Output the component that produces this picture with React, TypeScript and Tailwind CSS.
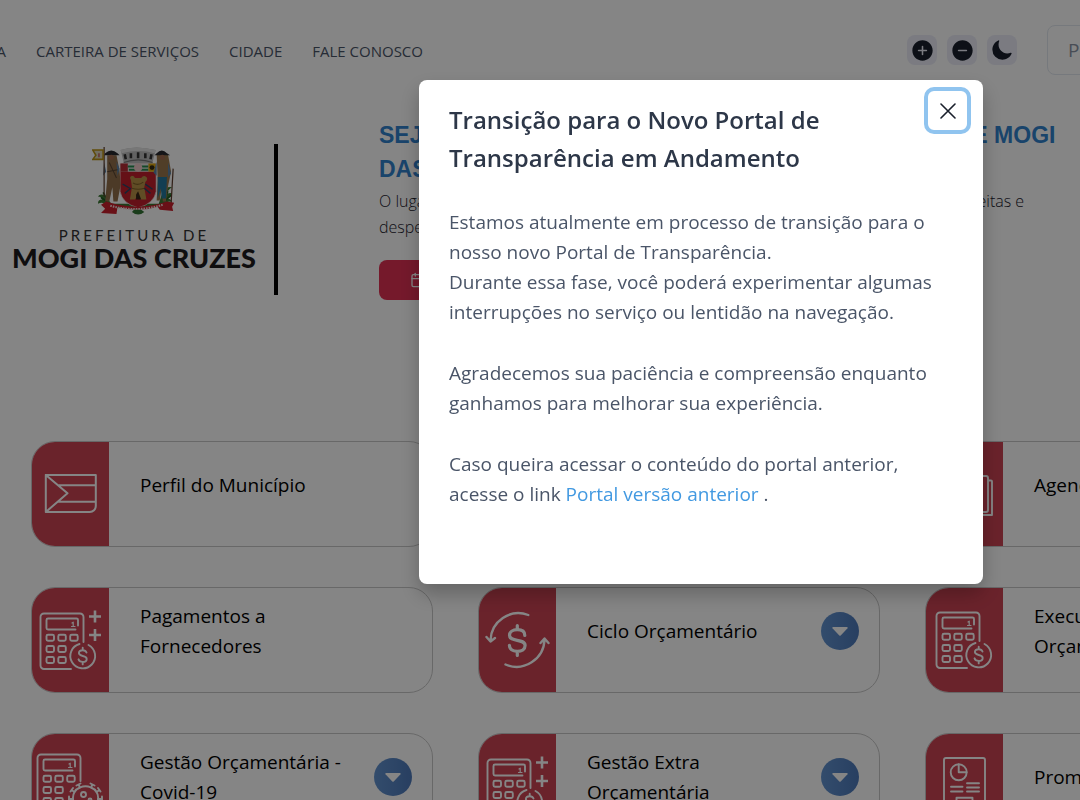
import React from "react";
import { IoAddCircle, IoRemoveCircle, IoMoon } from "react-icons/io5";
import { LuCalendar } from "react-icons/lu";

type IconName = "flag" | "agenda" | "calcPlus" | "cycle" | "calc" | "covid" | "report";

type Card = { title: string; icon: IconName; menu?: boolean };

const cards: Card[] = [
  { title: "Perfil do Município", icon: "flag" },
  { title: "Receitas", icon: "calc" },
  { title: "Agenda", icon: "agenda" },
  { title: "Pagamentos a Fornecedores", icon: "calcPlus" },
  { title: "Ciclo Orçamentário", icon: "cycle", menu: true },
  { title: "Execução Orçamentária", icon: "calc" },
  { title: "Gestão Orçamentária - Covid-19", icon: "covid", menu: true },
  { title: "Gestão Extra Orçamentária", icon: "calcPlus", menu: true },
  { title: "Promoções", icon: "report" },
];

function Calculator({ coin = true }: { coin?: boolean }) {
  return (
    <g>
      <path d={coin ? "M40 81H13a3.5 3.5 0 0 1-3.5-3.5V29a3.5 3.5 0 0 1 3.5-3.5h36A3.5 3.5 0 0 1 52.5 29v25" : "M36 81H13a3.5 3.5 0 0 1-3.5-3.5V29a3.5 3.5 0 0 1 3.5-3.5h36A3.5 3.5 0 0 1 52.5 29v23"} />
      <path d="M44.5 41.5H17a1.5 1.5 0 0 1-1.5-1.5v-8a1.5 1.5 0 0 1 1.5-1.5h28.5a1.5 1.5 0 0 1 1.5 1.5v5.5" />
      <path d="M41 35l1.2-.8v4M40.5 38.5h3.5" strokeWidth="1.2" />
      <rect x="15.5" y="46.8" width="7.5" height="6" rx="1.5" />
      <rect x="27.3" y="46.8" width="7.5" height="6" rx="1.5" />
      <rect x="39.2" y="46.8" width="7.5" height="6" rx="1.5" />
      <rect x="15.5" y="58" width="7.5" height="6" rx="1.5" />
      <rect x="27.3" y="58" width="7.5" height="6" rx="1.5" />
      <rect x="15.5" y="69" width="7.5" height="6" rx="1.5" />
      <rect x="27.3" y="69" width="7.5" height="6" rx="1.5" />
      {coin && (
        <>
          <path d="M57.5 57a12.4 12.4 0 1 1-9-1" />
          <path d="M55.5 64.5c-.6-1.7-2-2.3-3.8-2.3-2.2 0-3.8 1.1-3.8 2.9 0 4 7.8 1.7 7.8 5.8 0 1.9-1.7 3-4 3-2.1 0-3.7-.8-4.2-2.6M51.7 59.8v2.4M51.7 74v2.4" />
        </>
      )}
    </g>
  );
}

function CardIcon({ name }: { name: IconName }) {
  return (
    <svg viewBox="1 0 77 104" className="h-[104px] w-[77px]" fill="none" stroke="#fff" strokeWidth="1.9" strokeLinecap="round" strokeLinejoin="round" aria-hidden="true">
      {name === "flag" && (
        <path d="M14.8 33h50v31a6 6 0 0 1-6 6h-44zM14.8 33l21.7 18.3L14.8 70M28 43.2h36.5M28 59.7h36.5" strokeWidth="2" />
      )}
      {name === "agenda" && (
        <g>
          <rect x="14" y="34" width="49" height="36" rx="2" />
          <path d="M64 38.5h2a1 1 0 0 1 1 1V73H18" />
          <path d="M22 44h34M22 52h34M22 60h20" />
        </g>
      )}
      {name === "calc" && (
        <g transform="translate(2 -1)">
          <Calculator />
        </g>
      )}
      {name === "calcPlus" && (
        <g>
          <Calculator />
          <path d="M64 22.5v12M58 28.5h12M64 41v12M58 47h12" strokeWidth="2.6" strokeLinecap="butt" />
        </g>
      )}
      {name === "covid" && (
        <g transform="translate(-3 -5)">
          <Calculator coin={false} />
          <path d="M52 58.5l-1.5-3M63 58.5l1.5-3M48.5 56.5l4-2M62.5 54.5l4 2M46.5 63l-3-2M42.5 62.5l2.5-3.5M68.5 63l3-2M70 59l2.5 3.5M45 70h-4M41 67.5v5M70 70h4M74 67.5v5M48 78l-3 3M67 78l3 3M57.5 81v3" />
          <path d="M52 58.5q5.5-2.5 11 0 4 1.5 5.5 4.5 2 3 1.5 7 0 5-3 8-4 3-9.5 3t-9.5-3q-3-3-3-8-.3-4 1.5-7 1.5-3 5.5-4.5" />
          <circle cx="55.5" cy="65.5" r="2.5" />
          <circle cx="62" cy="71" r="1.5" />
        </g>
      )}
      {name === "cycle" && (
        <g strokeWidth="2.4">
          <path d="M50.3 27A28 28 0 0 0 12.5 52.5M8.5 49l4 4.5 4.5-3.5" />
          <path d="M27.5 76.5A28 28 0 0 0 66.5 51.5M62.5 55l4-4.5 4 4.5" />
          <path d="M46.8 47.5c0-4-3-5.8-7.5-5.8-4.6 0-7.8 2.1-7.8 5.6 0 7.2 15.6 2.8 15.6 10.2 0 3.8-3.3 5.8-7.8 5.8-4.8 0-7.9-2-7.9-6M39.3 37.5v4M39.3 63.5v4" strokeWidth="3.2" />
        </g>
      )}
      {name === "report" && (
        <g>
          <rect x="19" y="24" width="41" height="58" rx="2" />
          <circle cx="33.7" cy="38.3" r="8" />
          <path d="M33.7 30.5v7.8h7.8M26 52.7h11.5M26 57.5h11.5M42 49.3h12M42 53.5h12M42 57.5h12M31.5 74V63.8h16V74z" />
        </g>
      )}
    </svg>
  );
}

function CoatOfArms() {
  return (
    <svg viewBox="0 1 80 66" className="h-[68px] w-[84px]" aria-hidden="true">
      <path d="M12 48q-5-2-7 1 3 0 4 3-4 0-4 4 4-2 6 0l8 4 44-1 8-4q5-2 6 0-1-4-5-4 5-2 5-5-4-1-6 2 2-6 6-8-6-1-9 4l-4 12H18z" fill="#3c7a35" />
      <path d="M8 50l6 4M73 44l-4 9M76 48l-6 5M10 45l4 7" stroke="#1f5a25" strokeWidth="1.5" />
      <path d="M27 4q14-5 34 0l-4 16H31z" fill="#bcbcbc" />
      <path d="M27 4q14-5 34 0l-1 3q-15-4-32 0z" fill="#e4e4e4" />
      <path d="M31 8l1 5M37 7v5M44 6v6M51 7v5M57 8l-1 5" stroke="#333" strokeWidth="2.5" />
      <path d="M30 16q14-5 28 0" stroke="#777" fill="none" />
      <path d="M26.5 17h35v27q-2 12-17.5 16-15.5-4-17.5-16z" fill="#c21f2c" stroke="#eee" strokeWidth=".6" />
      <path d="M27 17h34v8H27z" fill="#e6e6e6" />
      <path d="M27 17h7v8h-7z" fill="#b62d37" />
      <path d="M34 20h20M35 23h19" stroke="#278b4e" strokeWidth="2" />
      <circle cx="44" cy="21" r="4" fill="#efc9c9" />
      <path d="M54 17h7v8h-7z" fill="#dda80f" />
      <circle cx="57.5" cy="21" r="2.4" fill="#342a12" />
      <path d="M37 33q-2-3 1-4 2 0 3 2h6q2-3 5-1 2 2-1 5l-1 5 2 12h-6l-2-5-3 5h-5l2-12z" fill="#b99247" />
      <path d="M42 47l2-3 3 8h-5z" fill="#382716" />
      <path d="M39 36q5 3 10-1M38 41q6 2 12 0" stroke="#7f5f28" fill="none" />
      <path d="M29 37l7 4M31 46l6-5M58 42l-7-5M56 46l-6-5" stroke="#264767" strokeWidth="1.3" />
      <path d="M14 9h9l3 15 1 14-3 16h-4l-1-14-3 14h-4l2-22z" fill="#92704c" />
      <path d="M23 15l3 7-2 7zM11 16l-1 13 3-4z" fill="#5d83a7" />
      <path d="M12 7q6-5 12 0l2 2H11z" fill="#29292f" />
      <circle cx="18" cy="11" r="2.5" fill="#a36b51" />
      <path d="M14 25l10-2M16 16l7 15" stroke="#5b4532" />
      <path d="M62 8h11l3 17-3 14-2 15h-3l-1-14-2 13h-3l1-20z" fill="#99784e" />
      <path d="M63 30h9l-1 21h-4l-1-10-3 10z" fill="#25789d" />
      <path d="M73 16l3 11-3 3zM62 15l-3 11 3 3z" fill="#5d83a7" />
      <path d="M62 7q5-5 10 0l3 2H60z" fill="#29292f" />
      <circle cx="67.5" cy="11" r="2.5" fill="#a36b51" />
      <path d="M78 22l-2 34M11 1v48" stroke="#604030" strokeWidth="1.2" />
      <path d="M0 4h10v9H0l3-4z" fill="#d8d3b8" stroke="#b99214" strokeWidth="1.5" />
      <path d="M6 7v4" stroke="#b52d36" />
      <path d="M8 57l5-3q31 10 59 0l7 1-2 4 1 4-13-1-2-3q-19 6-39 0l-1 7-15-1 4-4z" fill="#c9202d" />
      <path d="M17 58q26 7 51-1" stroke="#f5dada" strokeWidth="2" strokeDasharray="1.5 1" fill="none" />
      <path d="M38 64q6 5 12 0l-3-2h-7z" fill="#337334" />
    </svg>
  );
}

function PortalCard({ card }: { card: Card }) {
  return (
    <article className="flex h-[106px] overflow-hidden rounded-3xl border border-[#c8c8c8]">
      <div className="w-[77px] shrink-0 bg-[#cc4353]">
        <CardIcon name={card.icon} />
      </div>
      <div className="flex flex-1 items-center justify-between pr-5 pb-[18px] pl-[31px]">
        <a href="#" className="w-[206px] text-[19px] leading-[30px] text-black">{card.title}</a>
        {card.menu && (
          <button type="button" aria-label={`Abrir ${card.title}`} className="flex size-[38px] shrink-0 items-center justify-center rounded-full bg-linear-to-r from-[#6293d0] to-[#4d79ba]">
            <svg viewBox="0 0 16 9" className="h-[9px] w-4" fill="#fff" aria-hidden="true">
              <path d="M1 0h14q1 .5.5 1.3L8.7 8.5q-.7.6-1.4 0L.5 1.3Q0 .5 1 0z" />
            </svg>
          </button>
        )}
      </div>
    </article>
  );
}

const toolButton = "flex size-[30px] items-center justify-center rounded-lg bg-[#ebecf8] text-[#1a202c]";

export default function App() {
  return (
    <div className="relative h-screen overflow-hidden bg-white font-['Open_Sans','Noto_Sans',sans-serif]">
      <header className="flex h-[100px] items-center">
        <nav className="flex w-[423px] shrink-0 justify-end gap-[30px] pt-[2px] text-[15px] font-medium whitespace-nowrap text-[#4a5568]">
          <a href="#">TRANSPARÊNCIA</a>
          <a href="#">CARTEIRA DE SERVIÇOS</a>
          <a href="#">CIDADE</a>
          <a href="#">FALE CONOSCO</a>
        </nav>
        <div className="-mr-48 ml-auto flex shrink-0 items-center gap-[30px]">
          <div className="flex gap-[10px]">
            <button type="button" aria-label="Aumentar fonte" className={toolButton}><IoAddCircle size={25} /></button>
            <button type="button" aria-label="Diminuir fonte" className={toolButton}><IoRemoveCircle size={25} /></button>
            <button type="button" aria-label="Modo escuro" className={toolButton}><IoMoon size={22} /></button>
          </div>
          <input aria-label="Pesquisar" placeholder="Pesquisar" className="h-[50px] w-[225px] rounded-lg border border-[#e2e8f0] px-5 text-[19px] placeholder:text-[#8b95a5]" />
        </div>
      </header>

      <section className="flex h-[341px] pt-[44px]">
        <div className="mr-[101px] flex h-[151px] w-[278px] shrink-0 flex-col items-center border-r-4 border-black pt-[3px] pr-[6px]">
          <CoatOfArms />
          <p className="mt-[10px] font-['Lato',sans-serif] text-[15px] leading-5 tracking-[0.2em] text-[#333]">PREFEITURA DE</p>
          <p className="font-['Lato',sans-serif] text-[27px] leading-[26px] font-black whitespace-nowrap text-[#1d1b1e]">MOGI DAS CRUZES</p>
        </div>
        <div className="-mt-[26px] shrink-0">
          <h1 className="font-['Liberation_Sans',sans-serif] text-[23px] leading-[34px] font-bold whitespace-nowrap text-[#3182ce]">
            SEJA BEMVINDO AO PORTAL DA TRANSPARÊNCIA DE MOGI<br />DAS CRUZES
          </h1>
          <p className="mt-[2px] text-[16px] leading-[26px] font-light whitespace-nowrap text-[#1a202c]">
            O lugar onde você acompanha de forma simples, clara e rápida todas as nossas receitas e<br />despesas do município
          </p>
          <button type="button" className="mt-5 flex h-10 items-center gap-2 rounded-lg bg-[#e03054] px-[31px] text-[16px] text-white">
            <LuCalendar size={16} />
            Acessar
          </button>
        </div>
      </section>

      <main className="ml-[31px] grid w-[120%] grid-cols-3 gap-x-[45px] gap-y-10">
        {cards.map((card) => <PortalCard key={card.title} card={card} />)}
      </main>

      <div className="fixed inset-0 overflow-hidden bg-black/48 pt-20 pl-[419px]">
        <section role="dialog" aria-modal="true" aria-labelledby="dialog-title" className="relative min-h-[504px] w-[564px] rounded-lg bg-white px-[30px] pt-[21px] pb-[72px] text-[#4a5568] shadow-[0_10px_20px_rgba(0,0,0,0.25)]">
          <button type="button" aria-label="Fechar" className="absolute top-[7px] right-3 flex size-[47px] items-center justify-center rounded-[10px] text-[#1a202c] ring-4 ring-[#90c4ef] ring-inset">
            <svg viewBox="0 0 16 16" className="size-4" stroke="currentColor" strokeWidth="1.6" strokeLinecap="round" aria-hidden="true">
              <path d="M1 1l14 14M15 1L1 15" />
            </svg>
          </button>
          <h2 id="dialog-title" className="text-[24px] leading-[38px] font-semibold text-[#2d3748]">
            Transição para o Novo Portal de<br />Transparência em Andamento
          </h2>
          <div className="mt-[30px] flex flex-col gap-[31px] text-[19px] leading-[30px] whitespace-nowrap">
            <p>Estamos atualmente em processo de transição para o<br />nosso novo Portal de Transparência.<br />Durante essa fase, você poderá experimentar algumas<br />interrupções no serviço ou lentidão na navegação.</p>
            <p>Agradecemos sua paciência e compreensão enquanto<br />ganhamos para melhorar sua experiência.</p>
            <p>Caso queira acessar o conteúdo do portal anterior,<br />acesse o link <a href="#" className="text-[#4299e1]">Portal versão anterior</a> .</p>
          </div>
        </section>
      </div>
    </div>
  );
}
